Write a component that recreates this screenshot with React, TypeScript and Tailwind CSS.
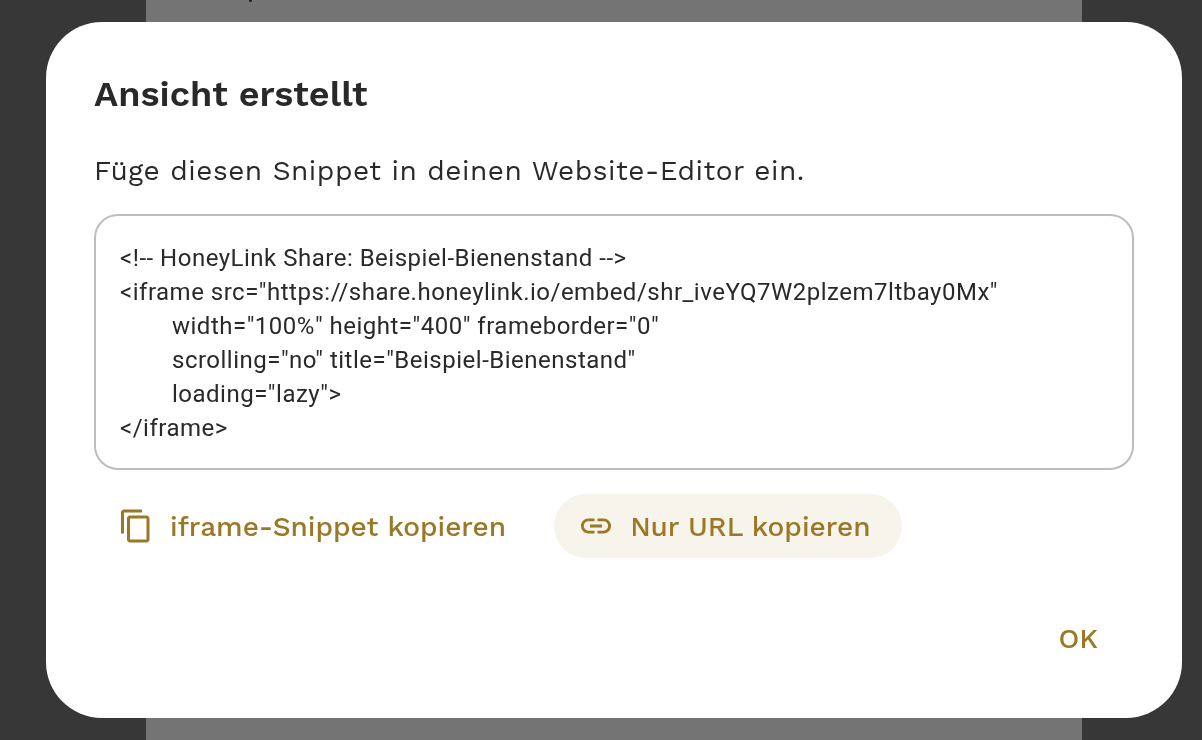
import React from 'react';

const gold = 'text-[#9a7826]';
const workSans = "font-['Work_Sans','Inter','Liberation_Sans',sans-serif]";

const CopyIcon = () => (
  <svg viewBox="0 0 24 24" className="w-9 h-9 fill-current shrink-0">
    <path d="M16 1H4c-1.1 0-2 .9-2 2v14h2V3h12V1zm3 4H8c-1.1 0-2 .9-2 2v14c0 1.1.9 2 2 2h11c1.1 0 2-.9 2-2V7c0-1.1-.9-2-2-2zm0 16H8V7h11v14z" />
  </svg>
);

const LinkIcon = () => (
  <svg viewBox="0 0 24 24" className="w-9 h-9 fill-current shrink-0">
    <path d="M3.9 12c0-1.71 1.39-3.1 3.1-3.1h4V7H7c-2.76 0-5 2.24-5 5s2.24 5 5 5h4v-1.9H7c-1.71 0-3.1-1.39-3.1-3.1zM8 13h8v-2H8v2zm9-6h-4v1.9h4c1.71 0 3.1 1.39 3.1 3.1s-1.39 3.1-3.1 3.1h-4V17h4c2.76 0 5-2.24 5-5s-2.24-5-5-5z" />
  </svg>
);

export default function App() {
  return (
    <div className="relative h-screen overflow-hidden bg-[#373737] flex">
      {/* Page behind the scrim */}
      <div className="ml-[146px] w-[936px] h-full bg-[#747474]">
        <div className="ml-[103px] w-[3px] h-[2px] rounded-b-full bg-[#222222]" />
      </div>

      {/* Dialog */}
      <div className={`absolute left-[46px] top-[22px] w-[1136px] h-[696px] bg-white rounded-[56px] p-12 flex flex-col will-change-transform ${workSans}`}>
        <h1 className="text-4xl leading-[48px] font-semibold text-[#2b2829]">Ansicht erstellt</h1>

        <p className="mt-[33px] text-[28px] leading-[40px] tracking-[0.5px] text-[#2b2829]">
          Füge diesen Snippet in deinen Website-Editor ein.
        </p>

        <div className="mt-[23px] h-[256px] border-2 border-[#bdbdbd] rounded-3xl px-6 pt-[25px] font-['Roboto',sans-serif] text-2xl leading-[34px] tracking-[0.5px] text-[#2b2829]">
          <div>{'<!-- HoneyLink Share: Beispiel-Bienenstand -->'}</div>
          <div>{'<iframe src="https://share.honeylink.io/embed/shr_iveYQ7W2plzem7ltbay0Mx"'}</div>
          <div className="pl-[52px]">{'width="100%" height="400" frameborder="0"'}</div>
          <div className="pl-[52px]">{'scrolling="no" title="Beispiel-Bienenstand"'}</div>
          <div className="pl-[52px]">{'loading="lazy">'}</div>
          <div>{'</iframe>'}</div>
        </div>

        <div className={`mt-6 flex gap-6 text-[28px] font-medium ${gold}`}>
          <button className="h-16 px-6 rounded-full flex items-center gap-4">
            <CopyIcon />
            <span className="pt-[1px]">iframe-Snippet kopieren</span>
          </button>
          <button className="h-16 pl-6 pr-8 rounded-full flex items-center gap-4 bg-[#f7f4ec]">
            <LinkIcon />
            <span className="pt-[1px]">Nur URL kopieren</span>
          </button>
        </div>

        <div className="mt-auto flex justify-end">
          <button className={`h-16 px-9 -mb-[1px] rounded-full text-[28px] font-medium ${gold}`}>OK</button>
        </div>
      </div>
    </div>
  );
}
